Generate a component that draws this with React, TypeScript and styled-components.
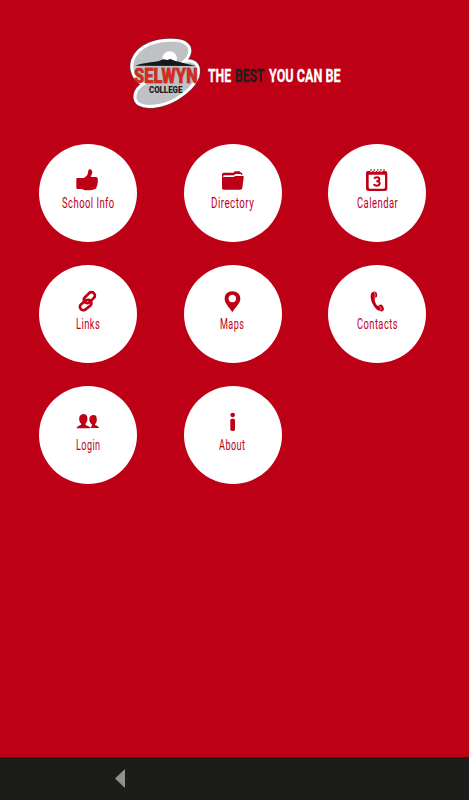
import React, { useLayoutEffect, useRef, useState } from 'react';
import styled, { createGlobalStyle } from 'styled-components';

const RED = '#be0017';

const GlobalStyle = createGlobalStyle`
  * { box-sizing: border-box; }
  body { margin: 0; background: ${RED}; font-family: Roboto, "Liberation Sans", sans-serif; }
`;

const Screen = styled.div`
  display: flex;
  flex-direction: column;
  width: 469px;
  height: 800px;
  overflow: hidden;
  background: ${RED};
`;

const Header = styled.header`
  display: flex;
  align-items: flex-start;
  height: 143.5px;
  padding: 30px 0 0 120px;
`;

const LogoArt = styled.svg`
  display: block;
  flex: none;
  width: 86px;
  height: 85px;
`;

const Tagline = styled.div`
  display: flex;
  margin: 37px 0 0 2px;
  gap: 4.2px;
  font-size: 18.7px;
  font-weight: 700;
  line-height: 19px;
  color: #fff;
  -webkit-text-stroke: 0.3px currentColor;
`;

const Menu = styled.nav`
  flex: 1;
  display: grid;
  grid-template-columns: repeat(3, 98px);
  grid-auto-rows: 98px;
  gap: 23.3px 46.5px;
  padding-left: 39px;
`;

const Tile = styled.a`
  display: flex;
  flex-direction: column;
  align-items: center;
  width: 98px;
  height: 98px;
  padding-top: 24px;
  border-radius: 50%;
  background: #fff;
  color: ${RED};
  text-decoration: none;
`;

const TileIcon = styled.svg`
  display: block;
  flex: none;
  width: 24px;
  height: 24px;
  fill: currentColor;
`;

const TileLabel = styled.div`
  margin-top: 2px;
  font-size: 14.8px;
  line-height: 18px;
  letter-spacing: 0.7px;
`;

const NavBar = styled.footer`
  display: flex;
  height: 43px;
  padding: 12px 0 0 115px;
  background: #1c1c1b;
`;

const BackArrow = styled.svg`
  width: 10px;
  height: 19px;
  fill: #90908e;
`;

const FitBox = styled.span<{ $width: number; $color?: string }>`
  display: block;
  width: ${(p) => p.$width}px;
  color: ${(p) => p.$color ?? 'inherit'};
`;

const FitInner = styled.span`
  display: inline-block;
  white-space: nowrap;
  transform-origin: 0 50%;
`;

function FitText({ width, color, children }: { width: number; color?: string; children: string }) {
  const ref = useRef<HTMLSpanElement>(null);
  const [scale, setScale] = useState(1);
  useLayoutEffect(() => {
    if (ref.current) setScale(width / ref.current.offsetWidth);
  }, [width]);
  return (
    <FitBox $width={width} $color={color}>
      <FitInner ref={ref} style={{ transform: `scaleX(${scale})` }}>{children}</FitInner>
    </FitBox>
  );
}

const items = [
  {
    label: 'School Info', width: 52.5, view: '123 82 72 72',
    art: <path d="M126 112h20c5-3 9-6 11-10 2-4 2-8 3-12 1-4 5-5 8-3 4 3 5 7 3 12l-4 10h15c5 0 7 3 6 7 1 2 1 4 0 6 1 3 1 5-1 7 1 3 0 6-2 8 0 5-2 8-7 9-5 3-22 4-31 2l-6-3h-13c-3 0-4-2-4-4v-26c0-2 1-3 2-3z" />,
  },
  {
    label: 'Directory', width: 43, view: '123 82 72 72',
    art: (
      <>
        <path d="M126 102c0-4 2-6 6-6h29l3-4h15l4 4c3 0 4 2 4 5v2h-3l-1-3h-17l-4 4h-28c-3 0-4 1-4 4l-4 4z" />
        <path d="M131 109h29c3 0 4-3 6-3h22c3 0 4 2 3 5l-4 31c-1 4-3 5-6 5h-50c-3 0-5-1-5-5v-29c0-3 2-4 5-4z" />
      </>
    ),
  },
  {
    label: 'Calendar', width: 41, view: '120 82 72 72',
    art: (
      <>
        <path fillRule="evenodd" d="M129 91h6q4 6 8 0h2q4 6 8 0h2q4 6 8 0h2q4 6 8 0h7q7 0 7 7v45q0 8-8 8h-48q-8 0-8-8V98q0-7 6-7zM131 102v38q0 4 4 4h41q4 0 4-4v-38z" />
        <path d="M138 86v4M148 86v4M158 86v4M168 86v4M177 86v4" fill="none" stroke="currentColor" strokeWidth="4" />
        <path d="M148 114q1-4 8-4 7 0 7 6 0 6-7 6h-2 2q8 0 8 6 0 7-8 7-8 0-9-5" fill="none" stroke="currentColor" strokeWidth="6" />
      </>
    ),
  },
  {
    label: 'Links', width: 24, view: '123 85 72 72',
    art: (
      <g fill="none" stroke="currentColor" strokeWidth="8">
        <rect x="-19" y="-10" width="38" height="20" rx="9.500" transform="translate(163 111) rotate(-44)" />
        <rect x="-19" y="-10" width="38" height="20" rx="9.500" transform="translate(152 133) rotate(-38)" />
      </g>
    ),
  },
  {
    label: 'Maps', width: 24.5, view: '123 85 72 72',
    art: <path fillRule="evenodd" d="M157 92c14 0 24 9 24 22 0 13-13 24-24 40-11-16-23-27-23-40 0-13 9-22 23-22zm0 10a11.500 11.500 0 1 0 .1 0z" />,
  },
  {
    label: 'Contacts', width: 41, view: '120 85 72 72',
    art: (
      <>
        <path d="M142 94c-7 5-6 21 0 34 5 11 14 21 21 23l3-14c-6 2-9-1-13-7-3-6-5-13-3-18z" />
        <ellipse cx="149" cy="102" rx="7.500" ry="9.500" transform="rotate(-8 149 102)" />
        <ellipse cx="168" cy="142" rx="8" ry="10.500" transform="rotate(-24 168 142)" />
        <path d="M148 94q5 7 1 17M164 136q5 5 4 13" fill="none" stroke="#fff" strokeWidth="1.500" />
      </>
    ),
  },
  {
    label: 'Login', width: 24.5, view: '123 84 72 72',
    art: (
      <>
        <path d="M163 138c3-3 9-5 8-10-7-6-10-14-7-22 4-8 17-9 20-2 3 8 2 17-4 23 0 5 11 4 12 11z" />
        <path d="M125 139c1-9 13-7 14-13-7-6-8-15-5-23 4-9 18-10 22-1 3 8 1 18-5 24 1 6 14 5 15 13z" stroke="#fff" strokeWidth="1.500" paintOrder="stroke" />
      </>
    ),
  },
  {
    label: 'About', width: 26.5, view: '123 84 72 72',
    art: (
      <>
        <ellipse cx="158" cy="99" rx="7" ry="6.500" />
        <rect x="151" y="110" width="14" height="37" rx="5" />
      </>
    ),
  },
];

function Logo() {
  const shape = 'M52 144C24 136 12 100 20 73C36 28 95 9 145 13C178 14 197 31 190 53C188 62 183 69 176 75C198 71 215 81 217 100C221 133 190 164 150 189C112 211 62 218 40 205C20 193 22 162 52 144Z';
  return (
    <LogoArt viewBox="0 0 258 255" role="img" aria-label="Selwyn College">
      <g transform="translate(18 18)">
        <path d={shape} fill="#bfc1c4" stroke="#504e52" strokeWidth="12" />
        <path d={shape} fill="#bfc1c4" stroke="#fff" strokeWidth="9" />
        <circle cx="131" cy="68" r="22" fill="#fff" />
        <path d="M28 89C54 80 79 79 97 76L112 70L124 72L133 69L146 74L184 84L210 90Z" fill="#18181a" />
      </g>
      <g fontFamily="Roboto, sans-serif">
        <text x="42" y="159" fontSize="62" fontWeight="900" textLength="191" lengthAdjust="spacingAndGlyphs" fill="#d9291c" stroke="#3a1515" strokeWidth="1.500" paintOrder="stroke">SELWYN</text>
        <text x="87" y="188" fontSize="27" fontWeight="900" textLength="100" lengthAdjust="spacingAndGlyphs" fill="#171719">COLLEGE</text>
      </g>
    </LogoArt>
  );
}

export default function App() {
  return (
    <Screen>
      <GlobalStyle />
      <Header>
        <Logo />
        <Tagline>
          <FitText width={23}>THE</FitText>
          <FitText width={29.5} color="#1d1d1b">BEST</FitText>
          <FitText width={71.500}>YOU CAN BE</FitText>
        </Tagline>
      </Header>
      <Menu>
        {items.map((item) => (
          <Tile key={item.label}>
            <TileIcon viewBox={item.view} aria-hidden="true">{item.art}</TileIcon>
            <TileLabel><FitText width={item.width}>{item.label}</FitText></TileLabel>
          </Tile>
        ))}
      </Menu>
      <NavBar>
        <BackArrow viewBox="0 0 10 19" aria-label="Back"><path d="M10 0v19L0 9.500z" /></BackArrow>
      </NavBar>
    </Screen>
  );
}
